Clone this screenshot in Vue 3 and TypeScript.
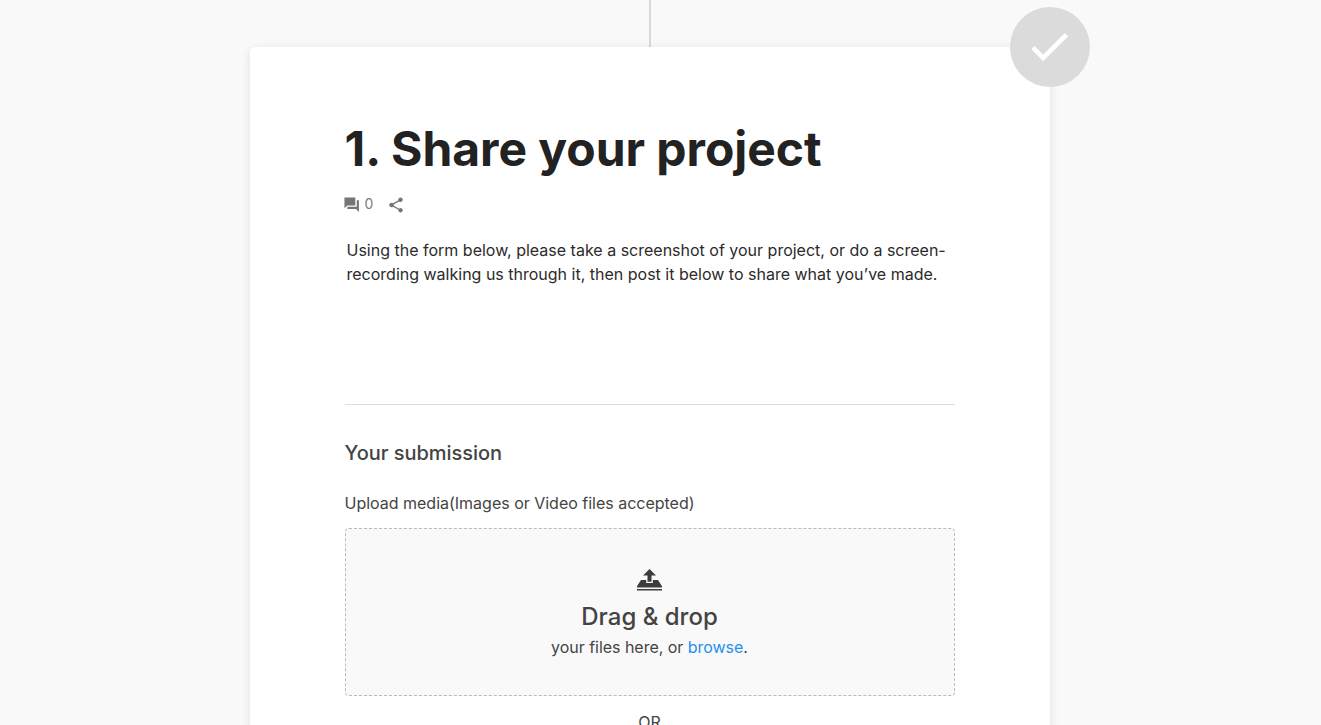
<script setup lang="ts">
const title: string = '1. Share your project'
const commentCount: number = 0
</script>

<template>
  <main class="page">
    <div class="connector"></div>
    <article class="card">
      <div class="status">
        <svg viewBox="0 0 48 48" width="48" height="48"><path d="M7.7 24 17.9 34.4 41.2 11.2" transform="translate(-.7 .5)" fill="none" stroke="#fff" stroke-width="4.6" /></svg>
      </div>
      <h1>{{ title }}</h1>
      <div class="meta">
        <svg viewBox="0 0 24 24" width="17.4" height="17.4"><path d="M22 6h-3v9H6v3h12l4 4zM17 2H2v15l4-4h11z" /></svg>
        <span class="count">{{ commentCount }}</span>
        <svg viewBox="0 0 24 24" width="18" height="18"><path d="M18 16.08c-.76 0-1.44.3-1.96.77L8.91 12.7c.05-.23.09-.46.09-.7s-.04-.47-.09-.7l7.05-4.11c.54.5 1.25.81 2.04.81 1.66 0 3-1.34 3-3s-1.34-3-3-3-3 1.34-3 3c0 .24.04.47.09.7L8.04 9.81C7.5 9.31 6.79 9 6 9c-1.66 0-3 1.34-3 3s1.34 3 3 3c.79 0 1.5-.31 2.04-.81l7.12 4.16c-.05.21-.08.43-.08.65 0 1.61 1.31 2.92 2.92 2.92s2.92-1.31 2.92-2.92-1.31-2.92-2.92-2.92z" /></svg>
      </div>
      <p class="description">Using the form below, please take a screenshot of your project, or do a screen-<br />recording walking us through it, then post it below to share what you’ve made.</p>
      <section class="submission">
        <h2>Your submission</h2>
        <p class="label">Upload media(Images or Video files accepted)</p>
        <div class="dropzone">
          <svg viewBox="0 0 25 22" width="25" height="22"><path d="M12.5 0 19 6.6h-4.5v6.2h-4V6.6H6zM4 11h5.2v3.1h6.6V11H21l4 6.2v1.2H0v-1.2zM0 20h25v1.6H0z" /></svg>
          <strong>Drag &amp; drop</strong>
          <p>your files here, or <a>browse</a>.</p>
        </div>
        <p class="or">OR</p>
      </section>
    </article>
  </main>
</template>

<style>
body { background: #f9f9f9; overflow: hidden; }
</style>
<style scoped>
.page { box-sizing: border-box; height: 725px; overflow: hidden; padding-right: 22px; font-family: Inter, "Liberation Sans", sans-serif; color: #444; background: #f9f9f9; }
h1, h2, p { margin: 0; }
.connector { width: 2px; height: 47px; margin: 0 auto; background: #d8d8d8; }
.card { position: relative; box-sizing: border-box; width: 800px; height: 900px; margin: 0 auto; padding: 72px 95px 0; background: #fff; border-radius: 5px; box-shadow: 0 2px 10px rgba(0, 0, 0, .1); }
.status { position: absolute; top: -40px; right: -40.5px; display: flex; align-items: center; justify-content: center; width: 80px; height: 80px; border-radius: 50%; background: #dbdbdb; }
h1 { font-size: 48px; line-height: 60px; font-weight: 700; letter-spacing: -.04px; color: #222; white-space: nowrap; }
.meta { display: flex; align-items: center; height: 18px; margin: 17px 0 0 -1.6px; font-size: 14px; color: #7d7d7d; fill: #757575; }
.count { margin: -3px 13.4px 0 4.2px; }
.description { margin: 24px 0 0 2px; font-size: 16px; line-height: 24px; white-space: nowrap; color: #2b2b2b; }
.submission { margin-top: 118px; border-top: 1px solid #ddd; }
h2 { margin-top: 36px; font-size: 20px; line-height: 24px; font-weight: 500; letter-spacing: -.04px; }
.label { margin-top: 26px; font-size: 16px; line-height: 24px; letter-spacing: -.01px; }
.dropzone { box-sizing: border-box; display: flex; flex-direction: column; align-items: center; height: 168px; margin-top: 13px; padding-top: 40px; border: 1px dashed #bbb; border-radius: 4px; background: #f9f9f9; fill: #3c3c3c; }
.dropzone strong { margin-top: 11px; font-size: 24px; line-height: 30px; font-weight: 500; }
.dropzone p { margin-top: 3px; font-size: 16px; line-height: 24px; letter-spacing: -.03px; }
a { color: #2490f0; }
.or { margin-top: 14px; text-align: center; font-size: 16px; line-height: 24px; }
</style>
